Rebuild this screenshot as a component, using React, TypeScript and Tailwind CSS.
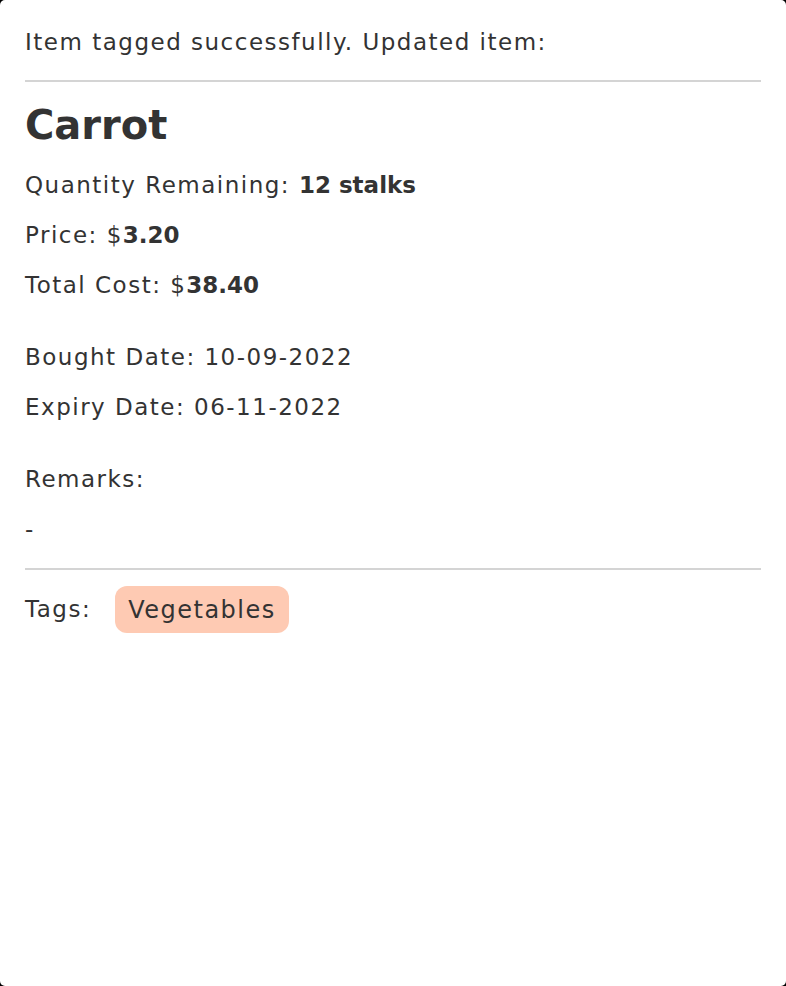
export default function App() {
  const num = 'font-bold tracking-normal'

  return (
    <div className="h-[986px] w-full bg-black">
      <div className="h-full w-full rounded-[5px] bg-white px-[25px] font-['DejaVu_Sans',sans-serif] text-[#333333]">
        {/* Header */}
        <div className="flex h-[80px] items-center pt-[4px] text-[23px] tracking-[1.5px]">
          Item tagged successfully. Updated item:
        </div>
        <div className="h-[2px] bg-[#d4d4d4]" />

        {/* Name */}
        <div className="flex h-[78px] items-center pt-[8px] text-[40px] font-bold">Carrot</div>

        {/* Quantity / price */}
        <div className="text-[23px] tracking-[1.5px]">
          <div className="flex h-[50px] items-center">
            Quantity Remaining:&nbsp;<span className={num}>12 stalks</span>
          </div>
          <div className="flex h-[50px] items-center">
            Price: $<span className={num}>3.20</span>
          </div>
          <div className="flex h-[50px] items-center">
            Total Cost: $<span className={num}>38.40</span>
          </div>
        </div>

        {/* Dates */}
        <div className="mt-[22px] text-[23px] tracking-[1.5px]">
          <div className="flex h-[50px] items-center">Bought Date: 10-09-2022</div>
          <div className="flex h-[50px] items-center">Expiry Date: 06-11-2022</div>
        </div>

        {/* Remarks */}
        <div className="mt-[22px] text-[23px] tracking-[1.5px]">
          <div className="flex h-[50px] items-center">Remarks:</div>
          <div className="flex h-[50px] items-center">-</div>
        </div>

        <div className="mt-[14px] h-[2px] bg-[#d4d4d4]" />

        {/* Tags */}
        <div className="mt-[16px] flex items-center gap-[24px]">
          <span className="text-[23px] tracking-[1.5px]">Tags:</span>
          <span className="flex h-[47px] items-center rounded-[12px] bg-[#fecab3] px-[13px] text-[24px] tracking-[1.5px]">
            Vegetables
          </span>
        </div>
      </div>
    </div>
  )
}
